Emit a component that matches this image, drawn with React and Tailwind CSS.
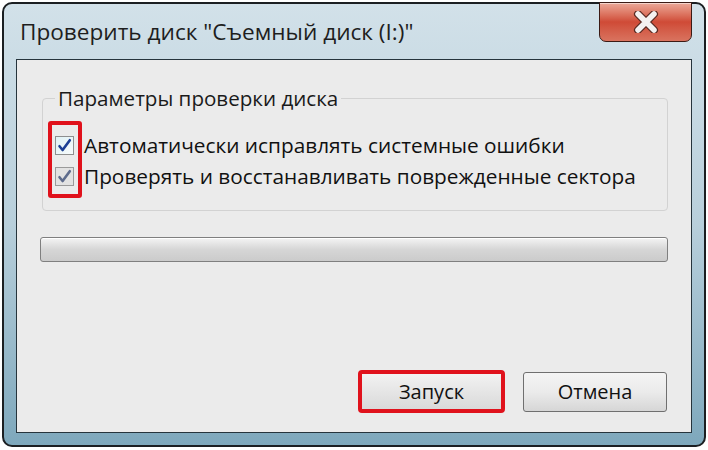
import React from 'react';

const font = { fontFamily: '"Open Sans", "Noto Sans", sans-serif' };

// Win7-style checkbox with a drawn tick
const CheckBox = ({ muted }) => (
  <div
    className={
      'w-[19px] h-[19px] border flex items-center justify-center ' +
      (muted ? 'border-[#9a9a9a] bg-[#e2e2e2]' : 'border-[#8e8f8f] bg-gradient-to-br from-[#dff1f5] to-[#f7fbfc]')
    }
  >
    <svg width="15" height="15" viewBox="0 0 15 15">
      <path
        d="M2.5 8.2 L5.6 12 L12.8 2.2"
        fill="none"
        stroke={muted ? '#5d6b8c' : '#1c3f94'}
        strokeWidth="2.6"
        strokeLinecap="round"
        strokeLinejoin="round"
      />
    </svg>
  </div>
);

const CloseButton = () => (
  <div className="w-[93px] h-[40px] -mt-[2px] rounded-b-[7px] border border-[#3b1a14] bg-gradient-to-b from-[#eaa898] via-[#cf4a36] to-[#d9735f] flex items-center justify-center shadow-[inset_0_1px_0_rgba(255,255,255,0.5)]">
    <svg width="26" height="22" viewBox="0 0 26 22">
      <path d="M5 3 L21 19 M21 3 L5 19" stroke="#5a2a22" strokeWidth="8" strokeLinecap="round" />
      <path d="M5 3 L21 19 M21 3 L5 19" stroke="#f4f1f0" strokeWidth="5.5" strokeLinecap="round" />
    </svg>
  </div>
);

export default function App() {
  return (
    <div className="w-[708px] h-[450px] bg-white pl-[2px] pt-[2px] overflow-hidden" style={font}>
      <div className="w-[704px] h-[445px] border-2 border-[#1b1f22] rounded-[10px] bg-gradient-to-b from-[#d2e1e9] via-[#b8cfdb] to-[#7ea8bc] flex flex-col px-[12px] pb-[12px]">
        {/* Title bar */}
        <div className="h-[55px] flex justify-between items-start">
          <div className="pt-[13px] pl-[4px] text-[22.6px] leading-[30px] text-[#1e1e1e]">
            Проверить диск "Съемный диск (I:)"
          </div>
          <CloseButton />
        </div>

        {/* Client area */}
        <div className="flex-1 border border-[#26343c] bg-[#ebebeb] flex flex-col relative">
          <fieldset className="mt-[26px] ml-[25px] mr-[23px] border border-[#d2d2d2] rounded-[4px] px-[12px] pt-[25px] pb-[24px]">
            <legend className="px-[3px] text-[20.6px] leading-[24px] text-[#1a1a1a]">Параметры проверки диска</legend>
            <div className="flex flex-col gap-[11px]">
              <div className="flex items-center gap-[10px]">
                <CheckBox />
                <span className="text-[20.8px] leading-[20px] text-[#111]">Автоматически исправлять системные ошибки</span>
              </div>
              <div className="flex items-center gap-[10px]">
                <CheckBox muted />
                <span className="text-[20.8px] leading-[20px] text-[#111]">Проверять и восстанавливать поврежденные сектора</span>
              </div>
            </div>
          </fieldset>

          {/* red highlight around the checkboxes */}
          <div className="absolute left-[31px] top-[61px] w-[34px] h-[77px] border-[4px] border-[#e0111b] rounded-[3px]" />

          {/* Progress bar */}
          <div className="mt-[26px] ml-[23px] mr-[23px] h-[25px] border border-[#7f7f7f] rounded-[3px] bg-gradient-to-b from-[#f4f4f4] via-[#d6d6d6] to-[#cbcbcb] shadow-[inset_0_1px_0_#fff]" />

          {/* Buttons */}
          <div className="mt-auto mb-[19px] mr-[24px] flex justify-end items-center gap-[18px]">
            <button className="w-[147px] h-[43px] border-[4px] border-[#e0121c] rounded-[4px] bg-gradient-to-b from-[#f2f2f2] to-[#d9d9d9] text-[20px] text-[#111]">
              Запуск
            </button>
            <button className="w-[144px] h-[40px] border border-[#6f6f6f] rounded-[3px] bg-gradient-to-b from-[#f4f4f4] via-[#ebebeb] to-[#d6d6d6] text-[20px] text-[#111]">
              Отмена
            </button>
          </div>
        </div>
      </div>
    </div>
  );
}
